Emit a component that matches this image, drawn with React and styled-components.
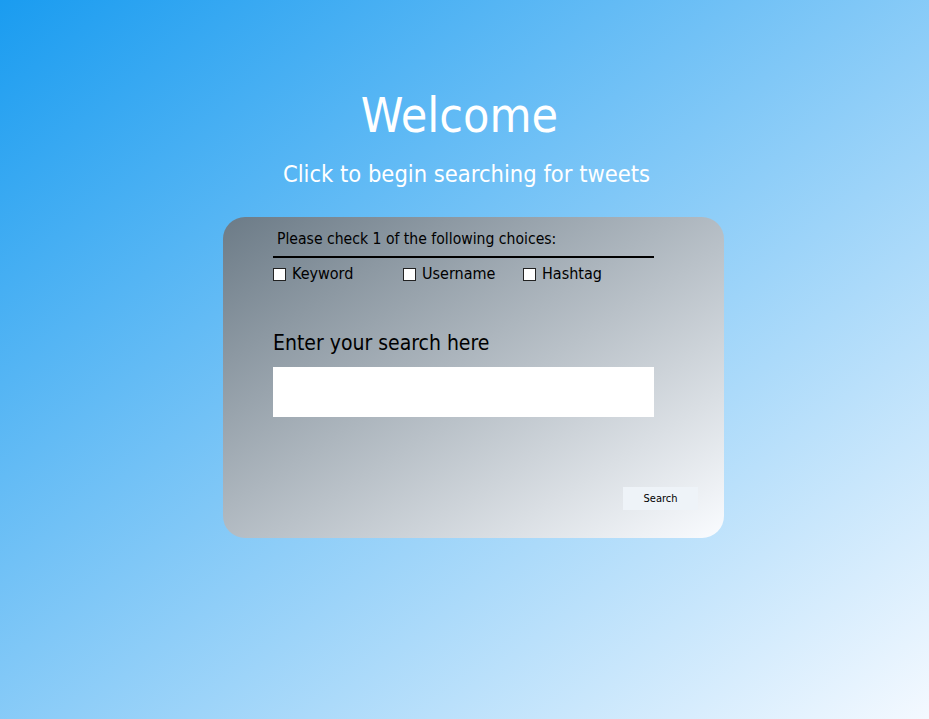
import React from 'react';
import styled, { createGlobalStyle } from 'styled-components';

const GlobalStyle = createGlobalStyle`
  html, body {
    margin: 0;
    padding: 0;
    height: 100%;
  }
  body {
    font-family: "DejaVu Sans Condensed", "DejaVu Sans", sans-serif;
    background: linear-gradient(to bottom right, #1a9cf0, #f4f9ff);
    min-height: 719px;
  }
`;

const Page = styled.div`
  width: 929px;
  height: 719px;
  display: flex;
  flex-direction: column;
  align-items: center;
`;

const Title = styled.h1`
  margin: 86px 0 0 -10px;
  font-size: 48px;
  line-height: 58px;
  font-weight: normal;
  color: #fff;
`;

const Subtitle = styled.h2`
  margin: 15px 0 0 4px;
  font-size: 23.5px;
  line-height: 30px;
  font-weight: normal;
  color: #fff;
`;

const Card = styled.form`
  margin: 28px 0 0 18px;
  width: 501px;
  height: 321px;
  box-sizing: border-box;
  padding: 12px 70px 0 50px;
  border-radius: 22px;
  background: linear-gradient(to bottom right, #6c7b87, #fafcff);
  display: flex;
  flex-direction: column;
  color: #000;
`;

const Legend = styled.div`
  font-size: 15.6px;
  line-height: 20px;
  padding: 0 0 7px 4px;
  border-bottom: 2px solid #000;
`;

const Choices = styled.div`
  display: flex;
  margin-top: 6px;
`;

const Choice = styled.label`
  display: flex;
  align-items: center;
  width: ${ ( { w } ) => w };
  font-size: 16px;
  line-height: 20px;
  cursor: pointer;
`;

const Box = styled.input.attrs( { type: 'checkbox' } )`
  appearance: none;
  margin: 0 6px 0 0;
  width: 13px;
  height: 13px;
  border: 1px solid #222;
  background: #fff;
  box-sizing: border-box;
`;

const Label = styled.label`
  margin-top: 46px;
  font-size: 21px;
  line-height: 26px;
`;

const Field = styled.input`
  margin-top: 11px;
  width: 381px;
  height: 50px;
  border: none;
  outline: none;
  background: #fff;
  box-sizing: border-box;
  padding: 0 10px;
  font-size: 16px;
`;

const Actions = styled.div`
  display: flex;
  justify-content: flex-end;
  margin: 70px -44px 0 0;
`;

const Button = styled.button`
  width: 75px;
  height: 23px;
  border: none;
  background: #eef3f8;
  font-family: inherit;
  font-size: 11px;
  color: #000;
  cursor: pointer;
`;

const App = () => {
	return (
		<Page>
			<GlobalStyle/>
			<Title>Welcome</Title>
			<Subtitle>Click to begin searching for tweets</Subtitle>
			<Card onSubmit={ ( e ) => e.preventDefault() }>
				<Legend>Please check 1 of the following choices:</Legend>
				<Choices>
					<Choice w={ '130px' }><Box name={ 'keyword' }/>Keyword</Choice>
					<Choice w={ '120px' }><Box name={ 'username' }/>Username</Choice>
					<Choice w={ '120px' }><Box name={ 'hashtag' }/>Hashtag</Choice>
				</Choices>
				<Label htmlFor={ 'search' }>Enter your search here</Label>
				<Field id={ 'search' } type={ 'text' }/>
				<Actions>
					<Button type={ 'submit' }>Search</Button>
				</Actions>
			</Card>
		</Page>
	);
};

export default App;
